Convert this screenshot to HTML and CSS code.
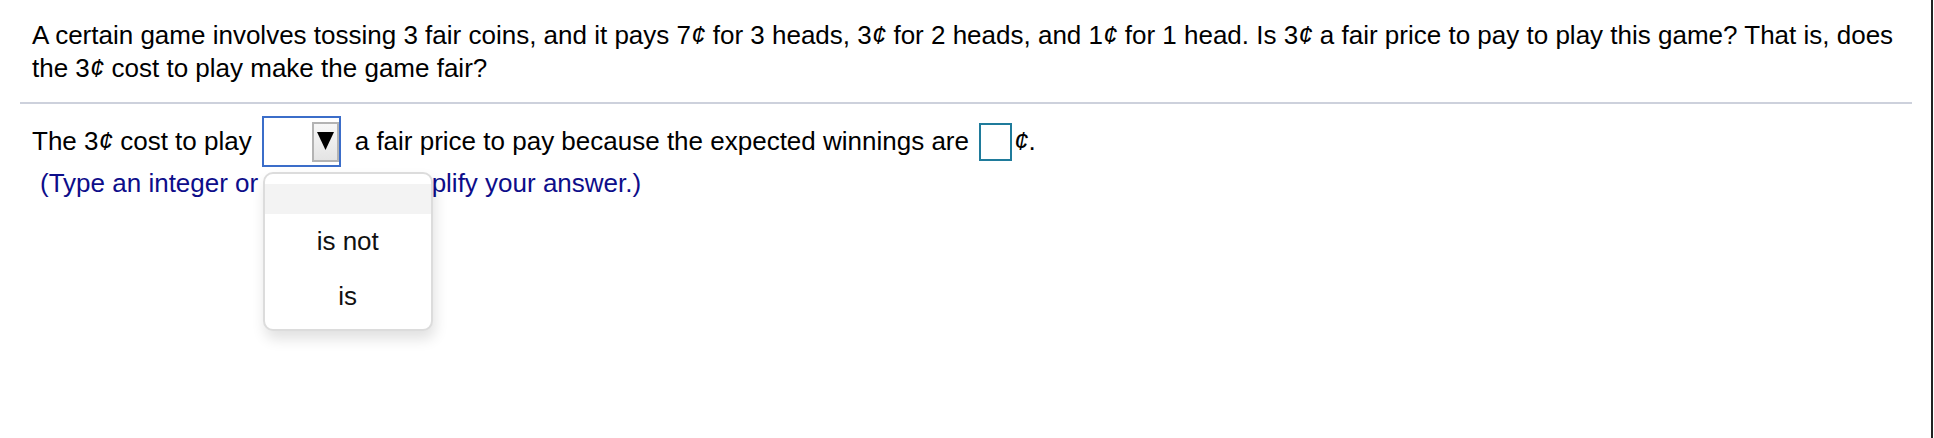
FILE: index.html
```html
<!DOCTYPE html>
<html>
<head>
<meta charset="utf-8">
<link rel="stylesheet" href="styles.css">
</head>
<body>
<div class="page">
  <div class="question">A certain game involves tossing 3 fair coins, and it pays 7<span class="cent">¢</span> for 3 heads, 3<span class="cent">¢</span> for 2 heads, and 1<span class="cent">¢</span> for 1 head. Is 3<span class="cent">¢</span> a fair price to pay to play this game? That is, does the 3<span class="cent">¢</span> cost to play make the game fair?</div>
  <div class="rule"></div>
  <div class="answer-row">
    <span>The 3<span class="cent">¢</span> cost to play</span>
    <div class="dropdown">
      <div class="drop-btn">
        <svg width="17" height="18" viewBox="0 0 17 18"><polygon points="0,0 17,0 8.5,18" fill="#000"/></svg>
      </div>
      <div class="drop-list">
        <div class="drop-item blank"></div>
        <div class="drop-item">is not</div>
        <div class="drop-item">is</div>
      </div>
    </div>
    <span>a fair price to pay because the expected winnings are</span>
    <div class="answer-box"></div>
    <span class="unit"><span class="cent">¢</span>.</span>
  </div>
  <div class="hint">(Type an integer or a fraction. Simplify your answer.)</div>
</div>
</body>
</html>
```

FILE: styles.css
```css
html, body {
  margin: 0;
  padding: 0;
  background: #fff;
}
body {
  font-family: "Liberation Sans", Arial, sans-serif;
  font-size: 26px;
  color: #000;
}
.page {
  width: 1931px;
  height: 438px;
  border-right: 2px solid #222;
  overflow: hidden;
}
.question {
  padding: 18.6px 20px 0 32px;
  line-height: 33.3px;
}
.cent {
  font-style: italic;
}
.rule {
  margin: 17px 0 0 20px;
  width: 1892px;
  height: 2px;
  background: #cdd1dc;
}
.answer-row {
  display: flex;
  align-items: center;
  margin-top: 12px;
  padding-left: 32px;
  line-height: 33.3px;
}
.dropdown {
  position: relative;
  box-sizing: border-box;
  width: 79px;
  height: 51px;
  margin: 0 14px 0 10px;
  border: 2px solid #3b6dc9;
  display: flex;
  justify-content: flex-end;
  align-items: center;
}
.drop-btn {
  box-sizing: border-box;
  width: 27px;
  height: 40px;
  margin-top: 1px;
  border: 2px solid #b3b3b3;
  background: linear-gradient(#f7f7f7, #e4e4e4);
  display: flex;
  align-items: center;
  justify-content: center;
}
.drop-btn svg {
  display: block;
  margin-top: -2px;
}
.drop-list {
  position: absolute;
  left: -1px;
  top: 54px;
  box-sizing: border-box;
  width: 170px;
  height: 159px;
  padding: 10px 0 8px;
  background: #fff;
  border: 2px solid #dcdcdc;
  border-radius: 10px;
  box-shadow: 2px 8px 14px rgba(0, 0, 0, 0.12);
  z-index: 5;
}
.drop-item {
  height: 55px;
  display: flex;
  align-items: center;
  justify-content: center;
  color: #111;
}
.drop-item.blank {
  height: 30px;
  background: #f3f3f3;
}
.answer-box {
  box-sizing: border-box;
  width: 33px;
  height: 38px;
  margin: 0 2px 0 10px;
  border: 2px solid #1f7b9b;
}
.hint {
  margin-top: 2px;
  padding-left: 40px;
  line-height: 28px;
  color: #0d0d8a;
}
```
